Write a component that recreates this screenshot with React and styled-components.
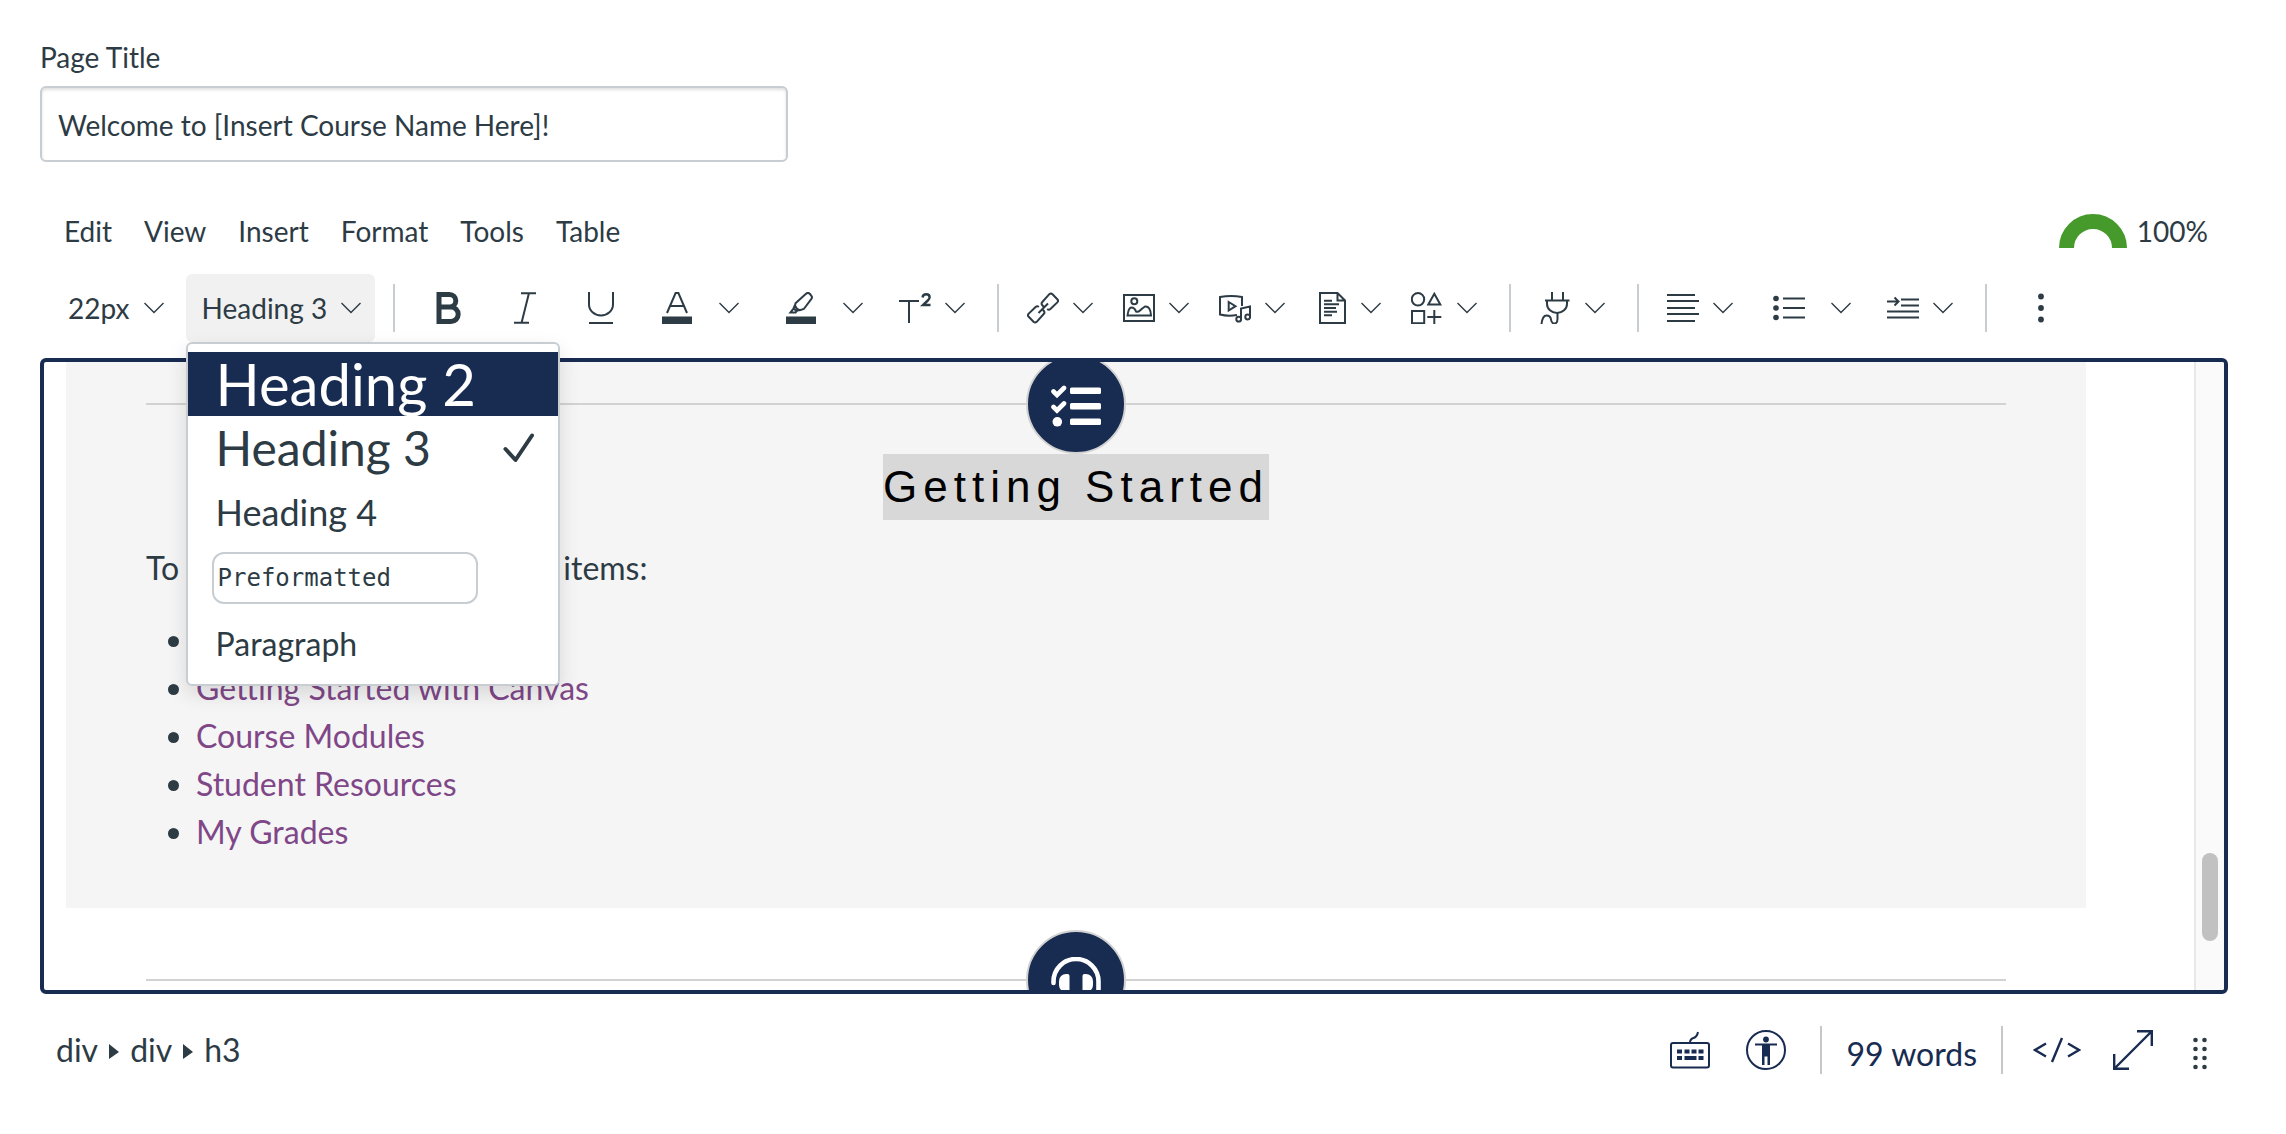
import React, { useState } from "react"

import styled, { createGlobalStyle } from "styled-components"

const colors = {
  navy: "#182b50",
  ink: "#2d3b45",
  border: "#c7cdd1",
  rule: "#d2d2d2",
  panel: "#f5f5f5",
  hover: "#f1f1f1",
  visited: "#7f4788",
  green: "#459a2b",
  selection: "#d8d8d8",
  white: "#ffffff",
}

const GlobalStyle = createGlobalStyle`
  * {
    box-sizing: border-box;
  }
  body {
    margin: 0;
    background: ${colors.white};
    color: ${colors.ink};
    font-family: Lato, "Liberation Sans", sans-serif;
    font-size: 28px;
    line-height: 34px;
  }
  button, input {
    font: inherit;
    color: inherit;
  }
  button {
    margin: 0;
    padding: 0;
    border: 0;
    background: none;
    cursor: pointer;
  }
  svg {
    display: block;
    flex: none;
  }
`

const Page = styled.main`
  display: flex;
  flex-direction: column;
  height: 100vh;
  padding: 40px 58px 0 40px;
`

const Field = styled.div`
  display: flex;
  flex-direction: column;
  align-items: flex-start;
  gap: 12px;
`

const TitleInput = styled.input`
  width: 748px;
  max-width: 100%;
  height: 76px;
  padding: 2px 16px 0;
  border: 2px solid ${colors.border};
  border-radius: 6px;
  box-shadow: inset 0 2px 3px rgba(0, 0, 0, 0.12);
  outline: none;
`

const MenuRow = styled.div`
  display: flex;
  justify-content: space-between;
  align-items: center;
  margin-top: 52px;
  padding: 0 20px 0 24px;
`

const MenuBar = styled.nav`
  display: flex;
  gap: 32px;
`

const Score = styled.div`
  display: flex;
  align-items: center;
  gap: 10px;
`

const Toolbar = styled.div`
  display: flex;
  height: 68px;
  margin: 26px 0 16px;
  padding-left: 18px;
`

const Group = styled.div`
  display: flex;
  align-items: center;

  & + &::before {
    content: "";
    width: 2px;
    height: 48px;
    margin: 0 16px 0 14px;
    background: ${colors.border};
  }
`

const ToolButton = styled.button`
  display: flex;
  align-items: center;
  justify-content: center;
  width: 76px;
  height: 68px;
`

const ArrowButton = styled.button`
  display: flex;
  align-items: center;
  width: 48px;
  height: 68px;
  padding-left: 4px;
`

const MenuButton = styled.button`
  display: flex;
  align-items: center;
  gap: 14px;
  width: 96px;
  height: 68px;
  padding-left: 12px;
`

const TextMenuButton = styled.button`
  display: flex;
  align-items: center;
  gap: 14px;
  height: 68px;
  padding: 0 14px 0 16px;
  border-radius: 6px;
  white-space: nowrap;
  background: ${props => (props.$open ? colors.hover : "none")};
`

const SizeButton = styled(TextMenuButton)`
  padding: 0 22px 0 10px;
`

const DropdownAnchor = styled.div`
  position: relative;
  margin-right: 4px;
`

const Dropdown = styled.div`
  position: absolute;
  z-index: 2;
  top: 100%;
  left: 0;
  width: 374px;
  padding: 8px 0;
  border: 2px solid ${colors.border};
  border-radius: 6px;
  background: ${colors.white};
  box-shadow: 0 8px 20px rgba(0, 0, 0, 0.12);
`

const Option = styled.button`
  display: flex;
  align-items: center;
  justify-content: space-between;
  width: 100%;
  height: ${props => (props.$tall ? "68px" : "64px")};
  padding: 0 23px 0 28px;
  font-size: ${props => props.$size}px;
  line-height: 1;
  text-align: left;
  color: ${props => (props.$active ? colors.white : colors.ink)};
  background: ${props => (props.$active ? colors.navy : "none")};
`

const Preformatted = styled.code`
  display: flex;
  align-items: center;
  width: 266px;
  height: 52px;
  margin-left: -4px;
  padding: 0 4px;
  border: 2px solid ${colors.border};
  border-radius: 12px;
  font-family: "DejaVu Sans Mono", monospace;
`

const Editor = styled.section`
  display: flex;
  flex: 1;
  min-height: 0;
  overflow: hidden;
  border: 4px solid ${colors.navy};
  border-radius: 6px;
`

const Canvas = styled.div`
  flex: 1;
  padding: 0 108px 0 22px;
  font-size: 32px;
  line-height: 48px;
`

const Section = styled.article`
  padding: 0 80px 52px;
  background: ${props => (props.$shaded ? colors.panel : "none")};
  /* the canvas is scrolled a little past the top of the first section */
  margin-top: ${props => (props.$shaded ? "-8px" : "22px")};
`

const Divider = styled.div`
  display: flex;
  align-items: center;

  &::before,
  &::after {
    content: "";
    flex: 1;
    height: 2px;
    background: ${colors.rule};
  }
`

const Badge = styled.span`
  display: flex;
  align-items: center;
  justify-content: center;
  width: 100px;
  height: 100px;
  border: 2px solid ${colors.rule};
  border-radius: 50%;
  background: ${colors.navy};
  color: ${colors.white};
`

const SectionTitle = styled.h3`
  margin: 0;
  font: 400 44px/66px "Liberation Sans", Arial, sans-serif;
  letter-spacing: 6px;
  text-align: center;
  color: #000;

  span {
    display: inline-block;
    background: ${colors.selection};
  }
`

const Intro = styled.p`
  margin: 24px 0;
`

const LinkList = styled.ul`
  margin: 0;
  padding-left: 50px;

  a {
    color: ${colors.visited};
    text-decoration: none;
  }
`

const ScrollTrack = styled.div`
  display: flex;
  flex-direction: column;
  justify-content: flex-end;
  align-items: center;
  width: 30px;
  padding-bottom: 49px;
  border-left: 2px solid #e8e8e8;
  background: #fafafa;
`

const ScrollThumb = styled.div`
  width: 16px;
  height: 88px;
  border-radius: 8px;
  background: #c1c1c1;
`

const StatusBar = styled.footer`
  display: flex;
  align-items: center;
  justify-content: space-between;
  height: 112px;
  margin-bottom: 28px;
  padding: 0 21px 0 16px;
  font-size: 32px;
  line-height: 38px;
`

const Breadcrumb = styled.nav`
  display: flex;
  align-items: center;
  gap: 11px;
`

const StatusTools = styled.div`
  display: flex;
  align-items: center;
  color: ${colors.navy};
`

const StatusGroup = styled.div`
  display: flex;
  align-items: center;
  gap: ${props => props.$gap || 0}px;
  padding: 0 ${props => props.$pad}px;

  & + & {
    height: 48px;
    border-left: 2px solid #c7c7c7;
  }
  &:last-child {
    padding-right: 0;
  }
`

const WordCount = styled.button`
  padding-top: 8px;
`

function Icon({ size = 32, width = size, height = size, stroke = 2, children }) {
  return (
    <svg
      width={width}
      height={height}
      viewBox={`0 0 ${width} ${height}`}
      fill="none"
      stroke="currentColor"
      strokeWidth={stroke}
      aria-hidden="true"
    >
      {children}
    </svg>
  )
}

const Chevron = () => (
  <Icon width={20} height={12} stroke={1.4}>
    <path d="M.5 1 10 10.5 19.5 1" />
  </Icon>
)

const BoldIcon = () => (
  <Icon stroke={5}>
    <path d="M6 2.5H16.5a6.2 6.2 0 0 1 0 12.6H6M16.5 15.1H18a7.2 7.2 0 0 1 0 14.4H6V0" />
  </Icon>
)

const ItalicIcon = () => (
  <Icon>
    <path d="M12 1.2H27M5 30.8H20M20 1 12.5 31" />
  </Icon>
)

const UnderlineIcon = () => (
  <Icon>
    <path d="M4 0V12.5a12 11 0 0 0 24 0V0M4 31H28" />
  </Icon>
)

const TextColorIcon = () => (
  <Icon>
    <path d="M6 21 14.6 1H17.4L26 21M9 14H23" />
    <path d="M1 24.5H31V32H1Z" fill="currentColor" stroke="none" />
  </Icon>
)

const HighlightIcon = () => (
  <Icon>
    <path d="M10.5 11.2 21 1.8q2-1.6 3.8 0l1.6 2q1.2 1.5 0 3L18.8 17l-4 1.2q-4-1.4-4.8-4.6ZM9.8 13.5l-1.3 3L5.4 20.6H10.5l2-2.3 2-.3M8.5 16.5l3 2.5" />
    <path d="M1 24.5H31V32H1Z" fill="currentColor" stroke="none" />
  </Icon>
)

const SuperscriptIcon = () => (
  <Icon>
    <path d="M0 9H20M10 9V31" />
    <path
      d="M23.5 5.5q.5-3.2 3.8-3.2 3.3 0 3.3 2.9 0 1.7-1.8 3.3L24 13h7.5"
      strokeWidth="2.4"
    />
  </Icon>
)

const LinkIcon = () => (
  <Icon>
    <path d="M17.5 15.5 15.3 13.2q-1.5-1.6 0-3.2L22.3 2.2q1.6-1.5 3.2 0L30.3 7.2q1.5 1.6 0 3.2L23.4 17q-1.6 1.4-3.2 0M14.5 16.5 16.7 18.8q1.5 1.6 0 3.2L9.7 29.8q-1.6 1.5-3.2 0L1.7 24.8q-1.5-1.6 0-3.2L8.6 15q1.6-1.4 3.2 0M11.5 21 21 11.5" />
  </Icon>
)

const ImageIcon = () => (
  <Icon>
    <rect x="1" y="3" width="30" height="26" />
    <circle cx="11.3" cy="9.3" r="3" />
    <path d="M4.5 23.5Q5.5 15.5 8.5 15.5T13 19.5Q15 20.5 17 18.5T22 14.5Q27.5 14 28 23.5Z" />
  </Icon>
)

const MediaIcon = () => (
  <Icon>
    <path d="M23 14V5Q12 3 1 5V22.5Q9 24.5 18 23" />
    <path d="M9.7 10 16.5 14.2 9.7 18.5ZM22 27V16.5L31 14.5V25" />
    <circle cx="19.7" cy="27.2" r="2.4" />
    <circle cx="28.7" cy="25" r="2.4" />
  </Icon>
)

const DocumentIcon = () => (
  <Icon>
    <path d="M5 1H22.5L30 8.5V31H5ZM22.5 1V8.5H30M9 8.7H17M9 12.3H24M9 16H21M9 19.7H22M9 23.3H17" />
  </Icon>
)

const ShapesIcon = () => (
  <Icon>
    <circle cx="7" cy="7.3" r="6.2" />
    <path d="M23.3 1.8 29.3 12.5H17.3ZM1 19H13.2V31.2H1ZM23.3 18V32M16.3 25H30.3" />
  </Icon>
)

const PlugIcon = () => (
  <Icon>
    <path d="M13 0V8M24 0V8M6 8.5H30.5M8 8.5V12a10 9 0 0 0 20 0V8.5M18.5 21V27q0 4.5-3 4.5T12 27.5 7.5 23.5 2.5 32" />
  </Icon>
)

const AlignIcon = () => (
  <Icon>
    <path d="M0 3H28M0 9H32M0 16H28M0 22H32M0 29H28" />
  </Icon>
)

const ListIcon = () => (
  <Icon>
    <path d="M10 6.5H32M10 16H32M10 25.5H32" />
    <g fill="currentColor" stroke="none">
      <circle cx="3" cy="6.5" r="2.8" />
      <circle cx="3" cy="16" r="2.8" />
      <circle cx="3" cy="25.5" r="2.8" />
    </g>
  </Icon>
)

const IndentIcon = () => (
  <Icon>
    <path d="M14 7.5H32M14 13.5H32M0 19.5H32M0 25.5H32M0 9.5H11M7.5 5.5 11.5 9.5 7.5 13.5" />
  </Icon>
)

const MoreIcon = () => (
  <Icon>
    <g fill="currentColor" stroke="none">
      <circle cx="16" cy="4.5" r="2.9" />
      <circle cx="16" cy="16" r="2.9" />
      <circle cx="16" cy="27.5" r="2.9" />
    </g>
  </Icon>
)

const CheckIcon = () => (
  <Icon stroke={4}>
    <path d="M2.5 17 12.5 28 29 3.5" strokeLinejoin="round" strokeLinecap="round" />
  </Icon>
)

const GaugeIcon = () => (
  <Icon width={68} height={34} stroke={15}>
    <path d="M7.5 34a26.5 26.5 0 0 1 53 0" stroke={colors.green} />
  </Icon>
)

const CaretIcon = () => (
  <Icon width={10} height={18}>
    <path d="M0 3 10 11 0 18Z" fill="currentColor" stroke="none" />
  </Icon>
)

const ChecklistIcon = () => (
  <Icon width={50} height={46} stroke={4.6}>
    <path d="M2.5 10.5 6 14 13 7M2.5 26 6 29.5 13 22.5" strokeLinecap="round" />
    <g fill="currentColor" stroke="none">
      <circle cx="6.3" cy="40.8" r="4.8" />
      <rect x="19" y="6.5" width="31" height="6.5" rx="1.5" />
      <rect x="19" y="22" width="31" height="6.5" rx="1.5" />
      <rect x="19" y="37.5" width="31" height="6.5" rx="1.5" />
    </g>
  </Icon>
)

const HeadphonesIcon = () => (
  <Icon width={50} height={46} stroke={4.6}>
    <path d="M2.5 26V24.5a22.5 22.5 0 0 1 45 0V38a5 5 0 0 1-5 5H30" strokeLinecap="round" />
    <g fill="currentColor" stroke="none">
      <path d="M15 17H16.5a2 2 0 0 1 2 2V35H15a7 7 0 0 1-7-7V24a7 7 0 0 1 7-7Z" />
      <path d="M35 17H33.5a2 2 0 0 0-2 2V35H35a7 7 0 0 0 7-7V24a7 7 0 0 0-7-7Z" />
    </g>
  </Icon>
)

const KeyboardIcon = () => (
  <Icon size={40}>
    <rect x="1" y="13" width="38" height="24.5" rx="2" />
    <path d="M20 13Q20 9 23.5 8T28 2" />
    <path
      d="M7 19.5h5v4H7ZM14.5 19.5h5v4h-5ZM21.5 19.5h5v4h-5ZM28.5 19.5h5v4h-5ZM7 26h5v4H7ZM14.5 26h12v4h-12ZM28.5 26h5v4h-5Z"
      fill="currentColor"
      stroke="none"
    />
  </Icon>
)

const AccessibilityIcon = () => (
  <Icon size={40}>
    <circle cx="20" cy="20" r="19" />
    <g fill="currentColor" stroke="none">
      <circle cx="20" cy="9.5" r="2.9" />
      <path d="M9 13.5H31V15.5H24V35H21.5V26.5H18.5V35H16V15.5H9Z" />
    </g>
  </Icon>
)

const CodeIcon = () => (
  <Icon width={48} height={26} stroke={2.4}>
    <path d="M13 6.5 2 13 13 19.5M35 6.5 46 13 35 19.5M29 1 19 25" />
  </Icon>
)

const ExpandIcon = () => (
  <Icon size={40} stroke={2.4}>
    <path d="M1.5 38.5 38.5 1.5M24 1.2H38.8V16M1.2 24V38.8H16" />
  </Icon>
)

const GripIcon = () => (
  <Icon width={22} height={40}>
    {[10, 19, 28, 37].map(y => (
      <g key={y} fill={colors.ink} stroke="none">
        <circle cx="10.5" cy={y} r="2.3" />
        <circle cx="19.5" cy={y} r="2.3" />
      </g>
    ))}
  </Icon>
)

const menus = ["Edit", "View", "Insert", "Format", "Tools", "Table"]

const links = [
  "Course Syllabus",
  "Getting Started with Canvas",
  "Course Modules",
  "Student Resources",
  "My Grades",
]

const blocks = [
  { name: "Heading 2", size: 58 },
  { name: "Heading 3", size: 48 },
  { name: "Heading 4", size: 36 },
  { name: "Preformatted", size: 24 },
  { name: "Paragraph", size: 32 },
]

function SplitButton({ label, icon }) {
  return (
    <>
      <ToolButton aria-label={label}>{icon}</ToolButton>
      <ArrowButton aria-label={`${label} menu`}>
        <Chevron />
      </ArrowButton>
    </>
  )
}

function CompactMenu({ label, icon }) {
  return (
    <MenuButton aria-label={label}>
      {icon}
      <Chevron />
    </MenuButton>
  )
}

function BlockPicker() {
  const [open, setOpen] = useState(true)
  const [block, setBlock] = useState("Heading 3")
  const [active, setActive] = useState("Heading 2")
  return (
    <DropdownAnchor>
      <TextMenuButton
        $open={open}
        aria-haspopup="listbox"
        aria-expanded={open}
        onClick={() => setOpen(!open)}
      >
        {block}
        <Chevron />
      </TextMenuButton>
      {open && (
        <Dropdown role="listbox" aria-label="Blocks">
          {blocks.map(({ name, size }) => (
            <Option
              key={name}
              role="option"
              aria-selected={name === block}
              $size={size}
              $active={name === active}
              $tall={name === "Preformatted"}
              onMouseEnter={() => setActive(name)}
              onClick={() => {
                setBlock(name)
                setOpen(false)
              }}
            >
              {name === "Preformatted" ? <Preformatted>{name}</Preformatted> : name}
              {name === block && <CheckIcon />}
            </Option>
          ))}
        </Dropdown>
      )}
    </DropdownAnchor>
  )
}

export default function App() {
  const [title, setTitle] = useState("Welcome to [Insert Course Name Here]!")
  return (
    <Page>
      <GlobalStyle />
      <Field>
        <label htmlFor="page-title">Page Title</label>
        <TitleInput
          id="page-title"
          type="text"
          value={title}
          onChange={e => setTitle(e.target.value)}
        />
      </Field>

      <MenuRow>
        <MenuBar>
          {menus.map(name => (
            <button key={name}>{name}</button>
          ))}
        </MenuBar>
        <Score>
          <GaugeIcon />
          100%
        </Score>
      </MenuRow>

      <Toolbar role="toolbar" aria-label="Formatting">
        <Group>
          <SizeButton>
            22px
            <Chevron />
          </SizeButton>
          <BlockPicker />
        </Group>
        <Group>
          <ToolButton aria-label="Bold"><BoldIcon /></ToolButton>
          <ToolButton aria-label="Italic"><ItalicIcon /></ToolButton>
          <ToolButton aria-label="Underline"><UnderlineIcon /></ToolButton>
          <SplitButton label="Text color" icon={<TextColorIcon />} />
          <SplitButton label="Background color" icon={<HighlightIcon />} />
          <CompactMenu label="Superscript" icon={<SuperscriptIcon />} />
        </Group>
        <Group>
          <CompactMenu label="Links" icon={<LinkIcon />} />
          <CompactMenu label="Images" icon={<ImageIcon />} />
          <CompactMenu label="Media" icon={<MediaIcon />} />
          <CompactMenu label="Documents" icon={<DocumentIcon />} />
          <CompactMenu label="Icon maker" icon={<ShapesIcon />} />
        </Group>
        <Group>
          <CompactMenu label="Apps" icon={<PlugIcon />} />
        </Group>
        <Group>
          <CompactMenu label="Align" icon={<AlignIcon />} />
          <SplitButton label="List" icon={<ListIcon />} />
          <CompactMenu label="Indent" icon={<IndentIcon />} />
        </Group>
        <Group>
          <ToolButton aria-label="More"><MoreIcon /></ToolButton>
        </Group>
      </Toolbar>

      <Editor aria-label="Page content">
        <Canvas>
          <Section $shaded>
            <Divider>
              <Badge><ChecklistIcon /></Badge>
            </Divider>
            <SectionTitle>
              <span>Getting Started</span>
            </SectionTitle>
            <Intro>To begin, please review these items:</Intro>
            <LinkList>
              {links.map(link => (
                <li key={link}>
                  <a href="#">{link}</a>
                </li>
              ))}
            </LinkList>
          </Section>
          <Section>
            <Divider>
              <Badge><HeadphonesIcon /></Badge>
            </Divider>
          </Section>
        </Canvas>
        <ScrollTrack>
          <ScrollThumb />
        </ScrollTrack>
      </Editor>

      <StatusBar>
        <Breadcrumb aria-label="Element path">
          <button>div</button>
          <CaretIcon />
          <button>div</button>
          <CaretIcon />
          <button>h3</button>
        </Breadcrumb>
        <StatusTools>
          <StatusGroup $pad={34} $gap={36}>
            <button aria-label="Keyboard shortcuts"><KeyboardIcon /></button>
            <button aria-label="Accessibility checker"><AccessibilityIcon /></button>
          </StatusGroup>
          <StatusGroup $pad={24}>
            <WordCount>99 words</WordCount>
          </StatusGroup>
          <StatusGroup $pad={30} $gap={32}>
            <button aria-label="HTML editor"><CodeIcon /></button>
            <button aria-label="Fullscreen"><ExpandIcon /></button>
            <button aria-label="Resize"><GripIcon /></button>
          </StatusGroup>
        </StatusTools>
      </StatusBar>
    </Page>
  )
}
